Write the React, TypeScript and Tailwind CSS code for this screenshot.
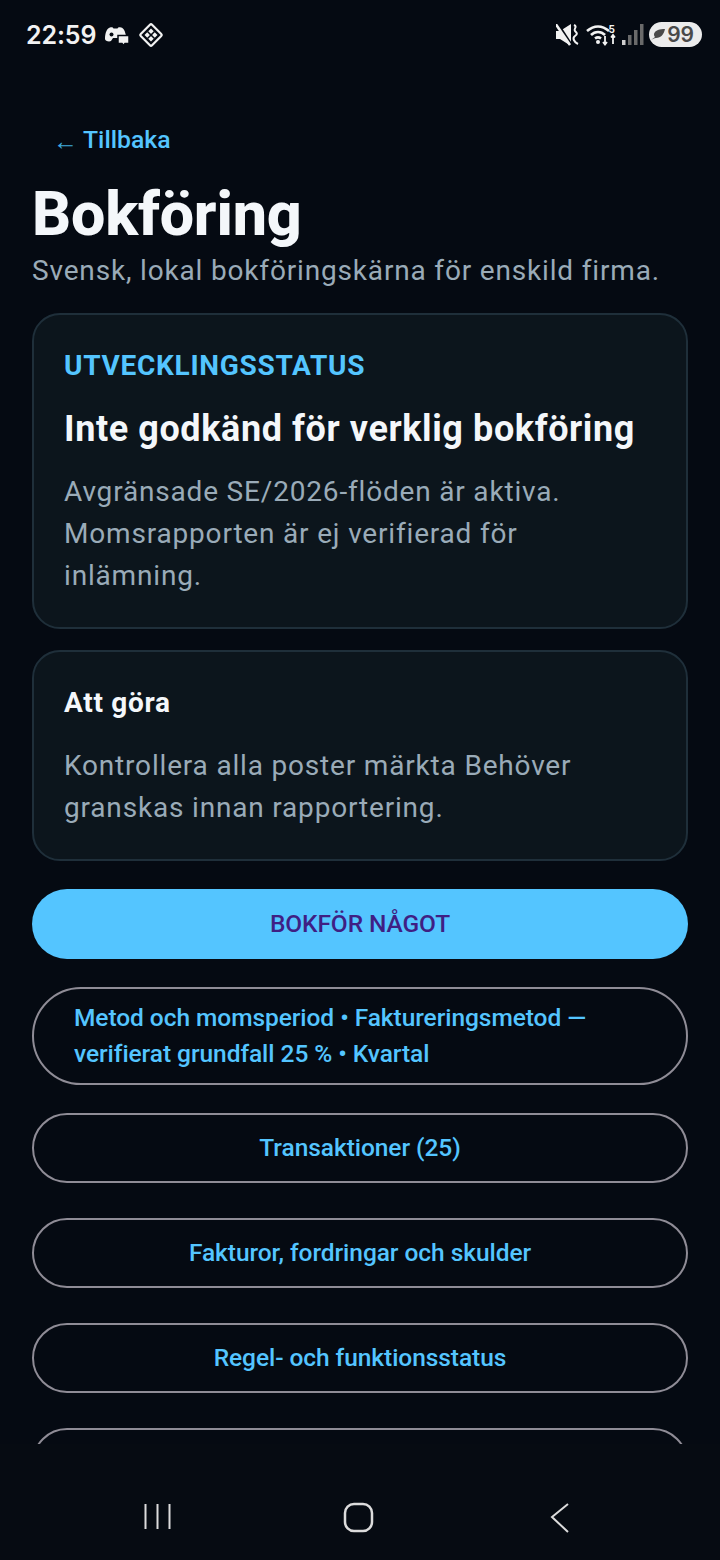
import React from "react";

const Pill = ({ children }: { children: React.ReactNode }) => (
  <div className="h-[70px] shrink-0 flex items-center justify-center rounded-full border-2 border-[#8f8c96] text-[#54c5ff] text-[24.5px] font-medium tracking-[-0.06px]">
    {children}
  </div>
);

const Card = ({ children, className }: { children: React.ReactNode; className: string }) => (
  <div className={`rounded-[28px] border-2 border-[#1f2f3a] bg-[#0c151c] px-[30px] ${className}`}>{children}</div>
);

export default function App() {
  return (
    <div className="w-[720px] h-[1560px] bg-[#050a12] flex flex-col overflow-hidden font-['Roboto',sans-serif]">
      <div className="h-[70px] shrink-0 flex items-center justify-between pl-[26px] pr-[18px] text-[#f2f2f2]">
        <div className="flex items-center gap-[10px]">
          <span className="font-['Inter',sans-serif] text-[25px] font-semibold tracking-[-0.1px] leading-none">22:59</span>
          <svg width="24" height="20" viewBox="0 0 24 20" className="translate-y-[1px] -translate-x-[1px]">
            <path d="M0 13C0 7 2 2 5 1.500 7 1 8 1.500 8.500 2.500h4C13 1.500 14 1 16 1.500c3 .5 4 4 5 8v3c-2 2-4 2-5 2l-2-2.500H8L6 15c-2 1-6 0-6-2z" fill="#f2f2f2" />
            <circle cx="6.500" cy="8.500" r="2" fill="#050a12" />
            <path d="M13 9.500h11v8h-4l-1.500 2-1.500-2h-4z" fill="#f2f2f2" stroke="#050a12" strokeWidth="1.500" />
          </svg>
          <svg width="26" height="26" viewBox="0 0 26 26" fill="none" className="-ml-[2px]">
            <rect x="5" y="5" width="16" height="16" rx="1.500" transform="rotate(45 13 13)" stroke="#f2f2f2" strokeWidth="2.200" />
            <path d="M13 6.500L19.500 13 13 19.500 6.500 13z" fill="#f2f2f2" />
            <path d="M9.500 9.500l7 7M16.500 9.500l-7 7" stroke="#050a12" strokeWidth="1.500" />
            <circle cx="13" cy="13" r="1.300" fill="#050a12" />
          </svg>
        </div>
        <div className="flex items-center pb-[1px]">
          <svg width="23" height="22" viewBox="0 0 23 22" fill="none" className="mr-[7px]">
            <path d="M0 7h4L15 0v22L4 15H0z" fill="#f2f2f2" />
            <path d="M1 -1l15 23" stroke="#050a12" strokeWidth="3" />
            <path d="M-1 -1l15 22" stroke="#f2f2f2" strokeWidth="2.600" />
            <path d="M18 1c4 2-1 4 1 6s3 3 0 5-1 6 3 8" stroke="#f2f2f2" strokeWidth="2" />
          </svg>
          <svg width="30" height="24" viewBox="0 0 30 24" fill="none" stroke="#f2f2f2" strokeWidth="2.600">
            <path d="M1 8c7-6 15-6 22 0M5 12c4-4 10-4 14 0M9 15.500c2-1.500 4-1.500 6 0" />
            <circle cx="12" cy="19" r="2" fill="#f2f2f2" stroke="none" />
            <path d="M19 13v8M17 19l2 2.500 2-2.500M27 21V12M25 14.500l2-2.500 2 2.500" strokeWidth="1.800" />
            <text x="22.500" y="9.500" fontSize="10" fill="#f2f2f2" stroke="none" fontFamily="Inter" fontWeight="700">5</text>
          </svg>
          <svg width="22" height="24" viewBox="0 0 22 24" className="ml-[6px] mr-[5px]" fill="#6a6a6a">
            <rect x="0" y="17" width="3.500" height="5" fill="#cfcfcf" />
            <rect x="6" y="12" width="3.500" height="10" />
            <rect x="12" y="7" width="3.500" height="15" />
            <rect x="18" y="1" width="3.500" height="21" />
          </svg>
          <div className="h-[25px] w-[53px] rounded-full bg-[#ececec] flex items-center justify-end pr-[8px] gap-[1px] text-[#4a4a4a] font-['Inter',sans-serif] font-semibold text-[21px] leading-none">
            <svg width="15" height="13" viewBox="0 0 15 13" fill="#4a4a4a">
              <path d="M0 12c2-1 3-2 5-2 5 0 8-4 9-9-5 0-10 1-11 5 0 1 0 2 1 3z" />
            </svg>
            <span>99</span>
          </div>
        </div>
      </div>

      <div className="h-[1374px] shrink-0 overflow-hidden px-[32px] flex flex-col">
        <div className="mt-[54px] ml-[24px] flex items-center text-[#54c5ff] text-[24.75px] font-medium leading-[32px] h-[32px]">
          <span className="w-[27px] font-normal text-[#3fa9dd] translate-y-[2px] -translate-x-[3px]">←</span>
          <span>Tillbaka</span>
        </div>
        <h1 className="mt-[22px] text-[61px] font-extrabold leading-[72px] text-[#f4f7fa] tracking-[-0.2px] h-[72px]">Bokföring</h1>
        <p className="mt-[3px] text-[28px] leading-[36px] text-[#9aabb8] tracking-[0.83px] whitespace-nowrap">Svensk, lokal bokföringskärna för enskild firma.</p>

        <Card className="mt-[24px] h-[316px] shrink-0 pt-[34px]">
          <div className="text-[#54c5ff] text-[28px] font-bold leading-[34px] tracking-[0.72px]">UTVECKLINGSSTATUS</div>
          <div className="mt-[24px] text-[#f4f7fa] text-[36px] font-bold leading-[44px] tracking-[0.6px] whitespace-nowrap">Inte godkänd för verklig bokföring</div>
          <div className="mt-[20px] text-[#9aabb8] text-[28px] leading-[42px] tracking-[0.82px]">
            Avgränsade SE/2026-flöden är aktiva.
            <br />
            Momsrapporten är ej verifierad för
            <br />
            inlämning.
          </div>
        </Card>

        <Card className="mt-[21px] h-[211px] shrink-0 pt-[33px]">
          <div className="text-[#f4f7fa] text-[28px] font-bold leading-[36px] tracking-[0.7px]">Att göra</div>
          <div className="mt-[24px] text-[#9aabb8] text-[28px] leading-[42px] tracking-[0.82px]">
            Kontrollera alla poster märkta Behöver
            <br />
            granskas innan rapportering.
          </div>
        </Card>

        <div className="mt-[28px] h-[70px] shrink-0 flex items-center justify-center rounded-full bg-[#54c5ff] text-[#3f1f84] text-[24.5px] font-medium tracking-[-0.1px]">
          BOKFÖR NÅGOT
        </div>

        <div className="mt-[28px] h-[98px] shrink-0 flex items-center rounded-[49px] border-2 border-[#8f8c96] pl-[40px] text-[#54c5ff] text-[24.5px] leading-[36px] font-medium tracking-[-0.06px]">
          <span>
            Metod och momsperiod • Faktureringsmetod —
            <br />
            verifierat grundfall 25 % • Kvartal
          </span>
        </div>

        <div className="mt-[28px] flex flex-col gap-[35px]">
          <Pill>Transaktioner (25)</Pill>
          <Pill>Fakturor, fordringar och skulder</Pill>
          <Pill>Regel- och funktionsstatus</Pill>
          <Pill> </Pill>
        </div>
      </div>

      <div className="flex-1 bg-[#060b12] flex items-center relative">
        <svg width="720" height="116" viewBox="0 0 720 116" fill="none" stroke="#dcdcdc">
          <path d="M145.500 60v25M157.500 60v25M169.500 60v25" strokeWidth="2" />
          <rect x="345" y="60" width="27" height="27" rx="9" strokeWidth="2.500" />
          <path d="M568 60L552 73l16 15" strokeWidth="2" />
        </svg>
      </div>
    </div>
  );
}
